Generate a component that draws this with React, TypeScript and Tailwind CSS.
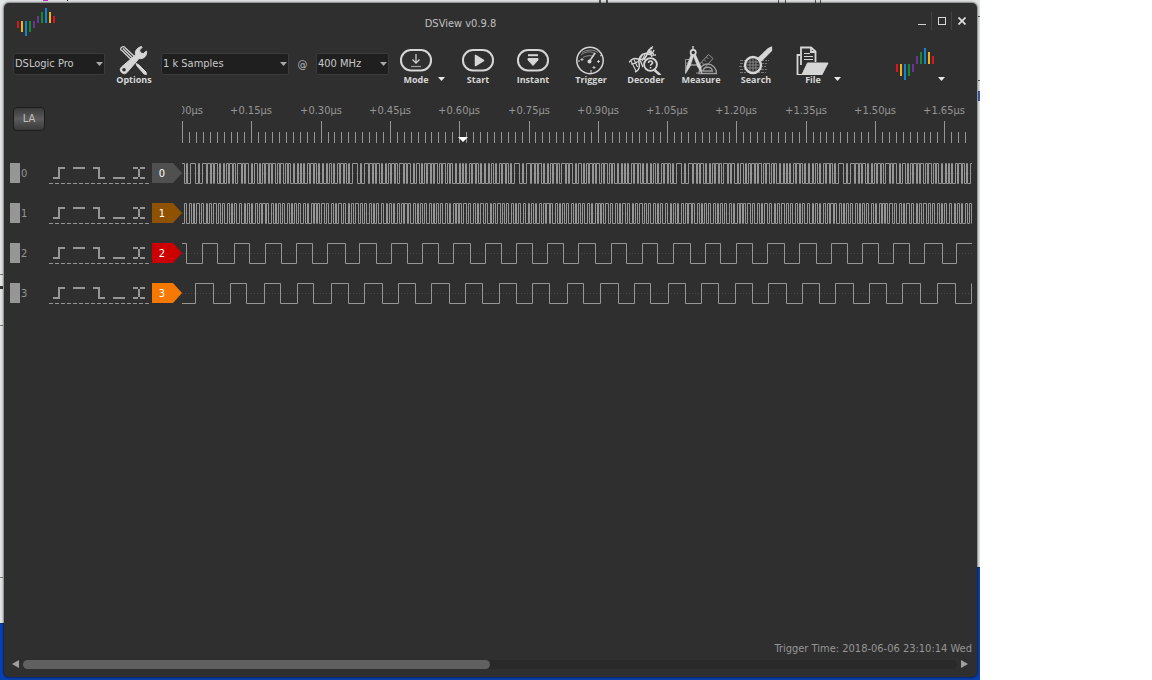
import React, { useState } from "react";

const LINE = "#969696";

function Bars({ step, className }: { step: number; className: string }) {
  const bars: [string, number, number][] = [
    ["#dc1428", 16, 8],
    ["#f0b414", 16, 12],
    ["#1482d2", 16, 16],
    ["#148c32", 16, 12],
    ["#6e329b", 16, 8],
    ["#6e329b", 8 + step, 8],
    ["#148c32", 4 + step, 12],
    ["#1482d2", step, 16],
    ["#f0b414", 4 + step, 12],
    ["#dc1428", 8 + step, 8],
  ];
  return (
    <svg width="40" height="34" viewBox="0 0 40 34" className={className} aria-hidden="true">
      {bars.map(([c, y, h], i) => (
        <rect key={i} x={i * 4} y={step ? (i < 5 ? 13 : y - step) : y} width="2" height={step ? h - 1 : h} fill={c} />
      ))}
    </svg>
  );
}

function Picker({ label, options, className }: { label: string; options: string[]; className: string }) {
  return (
    <div className={`relative mt-[14px] shrink-0 ${className}`}>
      <select
        aria-label={label}
        className="block h-[22px] w-full appearance-none rounded-[2px] border border-[#3b3b3b] bg-[#1f1f1f] p-0 pl-px text-[11px] leading-5 text-[#c8c8c8] outline-none"
      >
        {options.map((o) => (
          <option key={o}>{o}</option>
        ))}
      </select>
      <svg width="7" height="4" viewBox="0 0 7 4" className="pointer-events-none absolute right-[2px] top-[9px]">
        <path d="M0 0h7L3.500 4z" fill="#a8a8a8" />
      </svg>
    </div>
  );
}

function Tool({ label, className, children }: { label: string; className: string; children: React.ReactNode }) {
  return (
    <button className={`mt-[6px] flex shrink-0 flex-col items-center ${className}`}>
      <svg width="34" height="30" viewBox="0 0 34 30" fill="none" stroke="#d6d6d6" strokeWidth="1.5">
        {children}
      </svg>
      <span className="font-['Open_Sans',sans-serif] text-[9px] font-bold leading-[10px] text-[#d6d6d6]">{label}</span>
    </button>
  );
}

function MenuArrow({ label, className }: { label: string; className: string }) {
  return (
    <button aria-label={label} className={`mt-[37px] flex h-[6px] shrink-0 items-center justify-center ${className}`}>
      <svg width="7" height="4" viewBox="0 0 7 4">
        <path d="M0 0h7L3.500 4z" fill="#e8e8e8" />
      </svg>
    </button>
  );
}

const pill = <rect x="2" y="5" width="30" height="20.500" rx="10" strokeWidth="2" />;

function Toolbar() {
  return (
    <div className="flex h-[52px] items-start pl-[9px]">
      <Picker label="Device" options={["DSLogic Pro"]} className="w-[92px]" />
      <Tool label="Options" className="ml-[9px] mr-[7px] w-10">
        <path d="M4.500 5L14 14.500M6 3.500l10 10M7.800 2.500L18 12" strokeWidth="1.300" />
        <path d="M4.200 5.500a2.500 2.500 0 0 1 3.800-3.200" strokeWidth="1.200" />
        <path d="M19 18.500l2.500 1 7.500 7.500.5 2.500-2.500-.5-7-8z" fill="#d6d6d6" strokeWidth="1" />
        <path
          d="M4.500 22L18.500 10c-.8-4 1.500-7.500 6-8.500l.5 1-2.500 2.500 1 3 3 .5 3-2.500c1 4.500-3 8.500-7.500 7.500L10 27.500A3.800 3.800 0 0 1 4.500 22z"
          fill="#d6d6d6"
          strokeWidth="1"
        />
        <circle cx="7" cy="24.800" r="1.800" fill="#2f2f2f" stroke="none" />
      </Tool>
      <Picker label="Sample depth" options={["1 k Samples"]} className="w-32" />
      <span className="mt-[19px] w-[27px] shrink-0 text-center text-[11px] leading-[14px] text-[#b4b4b4]">@</span>
      <Picker label="Sample rate" options={["400 MHz"]} className="w-[73px]" />
      <Tool label="Mode" className="ml-[7px] w-10">
        {pill}
        <path d="M17 9v9M13.500 14.500L17 18.200l3.500-3.700" strokeWidth="1.200" />
        <path d="M12 21.500h10" strokeWidth="1.200" stroke="#a0a0a0" />
      </Tool>
      <MenuArrow label="Mode menu" className="w-[11px]" />
      <Tool label="Start" className="ml-[11px] w-10">
        {pill}
        <path d="M14.500 10.500l8 5-8 5z" fill="#d6d6d6" strokeLinejoin="round" />
      </Tool>
      <Tool label="Instant" className="ml-[15px] w-10">
        {pill}
        <path d="M12 10.200h10" strokeWidth="2" />
        <path d="M12 13.500h10v1.500l-5 5.500-5-5.500z" fill="#d6d6d6" strokeWidth="1" />
      </Tool>
      <Tool label="Trigger" className="ml-[13px] w-[50px]">
        <circle cx="16" cy="15.500" r="13.200" />
        <path d="M7 10c5-4 10-4 15-1M9 12.500c4-2 7-2.500 11-1M8 7.500c5-3 11-3.500 16 0" strokeWidth=".7" stroke="#b0b0b0" />
        <path d="M15 17l6-9" strokeWidth="1.500" />
        <circle cx="15.500" cy="16.500" r="2" fill="#d6d6d6" stroke="none" />
        <path d="M8 13v3M6.500 14.500h3M24.500 15v3M23 16.500h3M20 21v3M18.500 22.500h3" strokeWidth=".9" />
        <path d="M17 25v3M4 16h2M26 11l2-1" strokeWidth="1" />
      </Tool>
      <Tool label="Decoder" className="ml-[5px] w-[50px]">
        <path
          d="M0 17.500c2-3 5-5 9-3.500 5 1.500 8-1 9-5 .7-3 3-5.500 5.500-6M6 27c3-1 5-4 4-9-.8-5 2-9 6-9.500 3 0 5-1 6.500-3"
          strokeWidth="1.500"
        />
        <path
          d="M9 14c4 2 3.500 6 5 8M18 9c4 1 6-1 7-4M16 8.500c3 1 8 2 11 1.500M20 5l3 7"
          strokeWidth="1.300"
        />
        <path d="M2 16l5 10M5 14.500l3.500 7.500M11 14l3-5M13 16l3-7M15 15l3-5M21 3.500l3-2M22 6.500l3 3M2 19c3 0 5-1 8-3" strokeWidth="1.100" />
        <path d="M25.500 25l6 5.500" strokeWidth="2.400" />
        <circle cx="21.500" cy="19.500" r="6.400" fill="#2f2f2f" strokeWidth="1.900" />
        <path d="M19.500 18c0-2.800 4.200-2.500 4 0-.2 1.200-2 1.200-2 2.700M21.500 22v1.500" strokeWidth="1.600" />
      </Tool>
      <Tool label="Measure" className="ml-[5px] w-[50px]">
        <g stroke="#9c9c9c" strokeWidth=".9">
          <path d="M1.500 14.500V28M1.500 14.500H5M1.500 18h2M1.500 21h2M12 28h4" />
          <path d="M13 22L24.500 9.500l4.500 4L17 27M15 19.500l2 2M17.500 17l2 2M20 14.500l2 2M22.500 12l2 2" />
          <path d="M15 28.500c0-5 3.500-9.500 8.500-9.500S32.500 23 32.500 28.500zM19 26c1-5 8.500-5 9.500 0z" strokeWidth="1.300" />
        </g>
        <path d="M9 1v4" strokeWidth="1.400" />
        <path d="M7.500 8.500L3 20.500 1.500 28.500 6 21.500 9.500 11l4 10.500 4.500 7-1.500-8-5.500-12z" fill="#d6d6d6" strokeWidth=".6" />
        <circle cx="9.200" cy="7.500" r="2.600" fill="#2f2f2f" strokeWidth="1.700" />
        <path d="M5.500 20h8" strokeWidth="1" />
      </Tool>
      <Tool label="Search" className="ml-[5px] w-[50px]">
        <path d="M1 15.500h29M1 18.500h28M0 21.500h28M1 24.500h27M1 27.500h26" strokeWidth="1" stroke="#777777" strokeDasharray="3 1 2 1" />
        <path d="M19.500 13L29.500 3.500l3-1.500v3.500L22.500 15.500z" fill="#d6d6d6" strokeWidth="1.300" strokeLinejoin="round" />
        <circle cx="14" cy="20" r="8" fill="#2f2f2f" strokeWidth="2.400" />
        <path d="M8 17h12M7.500 20h13M8 23h12M11 14v12M14 13v14M17 14v12" strokeWidth=".9" stroke="#8c8c8c" />
      </Tool>
      <Tool label="File" className="ml-[12px] w-10">
        <path d="M5 20V2.500h10l4.500 4V17M15 2.500v4.500h4.500" strokeWidth="1.800" />
        <path d="M8 8.500h6M8 11.500h9M8 14.500h9" strokeWidth="1.200" />
        <path d="M4 10H1.500v20H6" strokeWidth="1.800" />
        <path d="M5.500 30.500L11.500 18H32l-6.500 12.500z" fill="#d6d6d6" strokeWidth="1" />
      </Tool>
      <MenuArrow label="File menu" className="w-[9px]" />
      <button aria-label="DreamSourceLab" className="ml-auto mt-[9px] shrink-0">
        <Bars step={0} className="" />
      </button>
      <MenuArrow label="About menu" className="mr-[30px] w-[11px]" />
    </div>
  );
}

function TitleBar() {
  return (
    <header className="flex h-9 items-start">
      <div className="flex-1 pl-[13px] pt-[5px]">
        <Bars step={2} className="block" />
      </div>
      <h1 className="mt-[13px] pr-[68px] text-[11px] leading-4 text-[#c0c0c0]">DSView v0.9.8</h1>
      <div className="flex flex-1 justify-end pr-[5px] pt-[9px]">
        <button aria-label="Minimize" className="flex h-[18px] w-5 items-center justify-center border-r border-[#444444]">
          <svg width="8" height="12">
            <path d="M0 9.500h8" stroke="#d0d0d0" strokeWidth="1" />
          </svg>
        </button>
        <button aria-label="Maximize" className="flex h-[18px] w-5 items-center justify-center border-r border-[#444444]">
          <svg width="8" height="8">
            <rect x=".5" y=".5" width="7" height="7" fill="none" stroke="#d8d8d8" />
          </svg>
        </button>
        <button aria-label="Close" className="flex h-[18px] w-5 items-center justify-center">
          <svg width="8" height="8">
            <path d="M.5.500l7 7M7.500.500l-7 7" stroke="#e0e0e0" strokeWidth="1.700" />
          </svg>
        </button>
      </div>
    </header>
  );
}

const TICK = 69.3;

function Ruler() {
  const labels = Array.from({ length: 12 }, (_, i) => i);
  const minors = Array.from({ length: 114 }, (_, i) => i);
  return (
    <svg className="h-[62px] w-full" aria-label="Time ruler">
      {minors.map((i) => {
        const x = Math.round((i * TICK) / 10) + 0.5;
        return <path key={i} d={`M${x} ${i % 10 ? 41 : 30}V52`} stroke={LINE} />;
      })}
      {labels.map((i) => (
        <text key={i} x={Math.round(i * TICK)} y="23" textAnchor="middle" fontSize="11" fill={LINE}>
          {`+${(i * 0.15).toFixed(2)}µs`}
        </text>
      ))}
      <path d="M276 46h10l-5 5z" fill="#ffffff" />
    </svg>
  );
}

function fromRuns(runs: string): number[] {
  const edges: number[] = [];
  let x = 0;
  for (let i = 0; x < 788; i++) {
    x += Number(runs[i % runs.length]);
    edges.push(x);
  }
  return edges;
}

type Channel = { id: number; tag: string; high: boolean; edges: number[] };

const channels: Channel[] = [
  {
    id: 0,
    tag: "#505050",
    high: true,
    edges: fromRuns("2213531341312132131221312241213312321221312132213221231312121321312213131222132131"),
  },
  {
    id: 1,
    tag: "#8f5200",
    high: false,
    edges: fromRuns("2232212322312223222232212232312221322213123221222232212222322132121223"),
  },
  {
    id: 2,
    tag: "#cc0000",
    high: true,
    edges: [
      4, 20, 35, 52, 67, 83, 99, 114, 130, 145, 163, 177, 194, 209, 225, 240, 256, 271, 288, 303, 319, 334, 350, 365,
      381, 396, 413, 429, 444, 460, 475, 491, 508, 523, 538, 554, 570, 585, 602, 617, 634, 649, 665, 680, 696, 711,
      727, 742, 760, 774,
    ],
  },
  {
    id: 3,
    tag: "#f57900",
    high: false,
    edges: [
      13, 31, 48, 64, 82, 98, 115, 131, 149, 166, 182, 200, 216, 233, 249, 267, 283, 300, 317, 334, 350, 367, 385, 401,
      418, 436, 452, 468, 486, 503, 519, 536, 553, 570, 586, 604, 620, 637, 653, 671, 687, 704, 720, 738, 755, 773, 789,
    ],
  },
];

function Wave({ channel }: { channel: Channel }) {
  let high = channel.high;
  let d = `M0 ${high ? 10.5 : 30.5}`;
  for (const x of channel.edges) {
    high = !high;
    d += `H${x + 0.5}V${high ? 10.5 : 30.5}`;
  }
  if (channel.edges[channel.edges.length - 1] < 789) d += "H4000";
  return (
    <svg className="h-10 w-full min-w-0 flex-1" aria-label={`Channel ${channel.id} signal`}>
      <path d="M0 20.500H4000" stroke="#484848" strokeDasharray="1 2" />
      <path d={d} fill="none" stroke={LINE} />
    </svg>
  );
}

const triggers = [
  { name: "Rising edge", d: "M4 25h6V15h6" },
  { name: "High level", d: "M4 15h12" },
  { name: "Falling edge", d: "M4 15h6v10h6" },
  { name: "Low level", d: "M4 25h12" },
  { name: "Either edge", d: "M4 15h5M11 15h5M4 25h5M11 25h5M10 16v2.500M10 18v4M10 21.500v2.500" },
];

function ChannelRow({ channel }: { channel: Channel }) {
  return (
    <div className="flex h-10 items-center">
      <span className="ml-[6px] h-5 w-[10px] bg-[#969696]" />
      <span className="mt-[2px] w-[29px] pl-px text-[11px] leading-4 text-[#969696]">{channel.id}</span>
      <div className="relative flex h-10 w-[100px]">
        {triggers.map((t) => (
          <button key={t.name} aria-label={`${t.name}, channel ${channel.id}`} className="h-10 w-5">
            <svg width="20" height="40" className="block">
              <path d={t.d} fill="none" stroke={LINE} strokeWidth="2" />
            </svg>
          </button>
        ))}
        <svg width="100" height="1" className="pointer-events-none absolute left-0 top-[30px]">
          <path d="M0 .5h100" stroke={LINE} strokeDasharray="4 2" />
        </svg>
      </div>
      <button className="relative ml-[3px] h-5 w-[30px] text-white">
        <svg width="30" height="20" className="absolute inset-0">
          <path d="M0 0h21l9 10-9 10H0z" fill={channel.tag} />
        </svg>
        <span className="relative block w-5 pt-px text-center text-[11px] leading-5">{channel.id}</span>
      </button>
      <Wave channel={channel} />
    </div>
  );
}

function ScrollBar() {
  const [start] = useState(0);
  return (
    <div className="flex items-center gap-1 pr-[9px] pb-2 pl-[8px]">
      <button aria-label="Scroll left">
        <svg width="7" height="9" className="block">
          <path d="M7 0v8L0 4z" fill="#a0a0a0" />
        </svg>
      </button>
      <div
        role="scrollbar"
        aria-controls="capture"
        aria-orientation="horizontal"
        aria-valuenow={start}
        className="h-[9px] flex-1 rounded-full bg-[#292929]"
      >
        <div className="h-[9px] w-1/2 rounded-full bg-[#606060]" />
      </div>
      <button aria-label="Scroll right">
        <svg width="7" height="9" className="block">
          <path d="M0 0v8l7-4z" fill="#a0a0a0" />
        </svg>
      </button>
    </div>
  );
}

export default function App() {
  return (
    <div className="flex min-h-screen bg-white pr-[172px] font-['DejaVu_Sans_Condensed','Noto_Sans',sans-serif]">
      <div className="relative flex min-w-0 flex-1 flex-col bg-[#0a40ae]">
        <div aria-hidden="true" className="absolute inset-x-0 top-0 bottom-[56px] flex justify-between">
          <div className="relative w-1/2 border-b border-[#16356e] bg-[#e2e5e5]">
            <span className="absolute left-[43px] top-0 h-px w-[5px] bg-[#c832c8]" />
            <span className="absolute left-[67px] top-0 h-px w-px bg-black" />
            <span className="absolute left-0 top-[274px] h-px w-[3px] bg-[#777777]" />
            <span className="absolute left-0 top-[286px] h-[3px] w-[3px] bg-[#333333]" />
            <span className="absolute left-0 top-[325px] h-px w-[3px] bg-[#777777]" />
            <span className="absolute left-0 top-[577px] h-px w-[3px] bg-[#777777]" />
          </div>
          <div className="relative mb-[56px] w-1/2 border-b border-[#16356e] bg-[#e2e5e5]">
            <span className="absolute left-[109px] top-0 h-[3px] w-[9px] border-x-2 border-[#555555]" />
            <span className="absolute left-[288px] top-0 h-[3px] w-[8px] border-x border-[#555555]" />
            <span className="absolute left-[325px] top-0 h-[3px] w-[6px] border-x border-[#555555]" />
            <span className="absolute right-0 top-4 h-px w-[2px] bg-[#555555]" />
            <span className="absolute right-0 top-[80px] h-px w-[2px] bg-[#555555]" />
            <span className="absolute right-0 top-[91px] h-[10px] w-[2px] bg-[#3a5aa8]" />
          </div>
        </div>
        <main className="relative mt-[3px] mr-[3px] mb-[3px] ml-1 flex flex-1 flex-col rounded-[5px] bg-[#2f2f2f] shadow-[0_0_2px_1px_rgba(0,0,0,0.45)]">
          <TitleBar />
          <Toolbar />
          <section id="capture" className="flex-1 pr-[5px]">
            <div className="flex">
              <div className="w-[178px] shrink-0 pl-[9px] pt-[14px]">
                <button className="h-6 w-8 rounded-[4px] border border-[#1c1c1c] bg-linear-to-b from-[#3a3a3a] via-[#5c5a5a] to-[#3a3a3a] text-[11px] text-[#c0c0c0]">
                  LA
                </button>
              </div>
              <div className="min-w-0 flex-1">
                <Ruler />
              </div>
            </div>
            {channels.map((c) => (
              <ChannelRow key={c.id} channel={c} />
            ))}
          </section>
          <p className="pr-[5px] pb-[3px] text-right text-[11px] leading-4 text-[#969696]">Trigger Time: 2018-06-06 23:10:14 Wed</p>
          <ScrollBar />
        </main>
      </div>
    </div>
  );
}
